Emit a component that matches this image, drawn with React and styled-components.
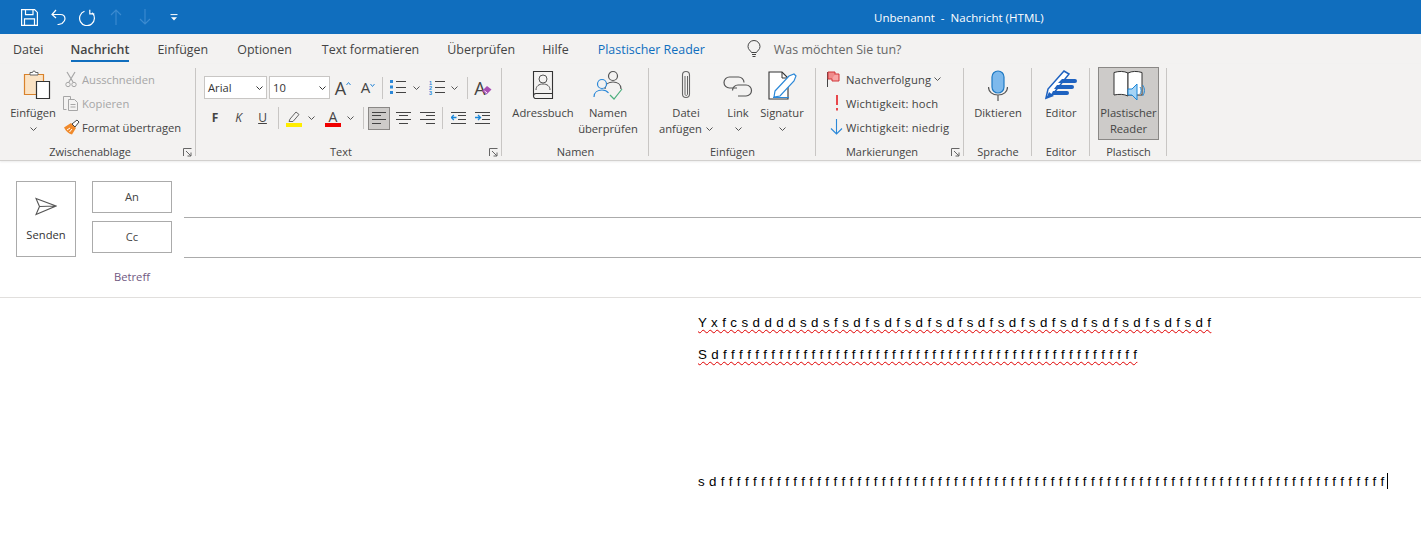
import React from "react";
import styled, { createGlobalStyle } from "styled-components";

const Global = createGlobalStyle`
  html, body { margin: 0; padding: 0; background: #fff; }
  body { font-family: "Open Sans", "Noto Sans", "Liberation Sans", sans-serif; width: 1421px; height: 559px; overflow: hidden; }
`;
const Page = styled.div`width:1421px;height:559px;display:flex;flex-direction:column;background:#fff;overflow:hidden;`;
const TitleBar = styled.header`height:34px;background:#106ebe;display:flex;align-items:center;flex:none;`;
const Qat = styled.div`display:flex;align-items:center;width:874px;padding-left:21px;box-sizing:border-box;`;
const QatBtn = styled.span`width:${p=>p.$w}px;display:flex;align-items:center;`;
const Title = styled.div`color:#fff;font-size:11.55px;white-space:pre;`;
const TabBar = styled.nav`height:30px;background:#f3f2f1;display:flex;align-items:center;padding-left:13px;flex:none;font-size:12.45px;color:#444;`;
const Tab = styled.span`
  margin-right:${p=>p.$gap}px;position:relative;height:30px;box-sizing:border-box;padding-top:1px;line-height:30px;white-space:nowrap;
  color:${p=>p.$blue?"#106ebe":"#444"};
  font-weight:${p=>p.$active?600:400};
  ${p=>p.$active?`&::after{content:"";position:absolute;left:0;right:0;bottom:2px;height:2px;background:#106ebe;}`:""}
`;
const Tell = styled.span`color:#666;margin-left:13px;`;
const Ribbon = styled.section`height:97px;box-sizing:border-box;padding:4px 0 0;background:#f3f2f1;display:flex;flex:none;border-bottom:1px solid #d2d0ce;box-shadow:0 1px 2px rgba(0,0,0,.08);font-size:11.2px;color:#444;`;
const Group = styled.div`
  width:${p=>p.$w}px;display:flex;flex-direction:column;position:relative;flex:none;
  &::after{content:"";position:absolute;top:0;right:0;bottom:4px;width:1px;background:#c8c6c4;}
`;
const GroupBody = styled.div`flex:1;display:flex;padding-left:${p=>p.$pl||0}px;min-height:0;`;
const GroupLabel = styled.div`height:16px;line-height:16px;text-align:center;font-size:11px;color:#444;white-space:nowrap;padding-right:${p=>p.$launcher?16:0}px;`;
const Launcher = styled.span`position:absolute;right:4px;bottom:3px;display:flex;`;
const BigBtn = styled.div`
  width:${p=>p.$w}px;box-sizing:border-box;display:flex;flex-direction:column;align-items:center;flex:none;
  text-align:center;line-height:16px;white-space:nowrap;
  padding-top:2px;height:${p=>p.$pressed?"73px":"auto"};
  ${p=>p.$pressed?"background:#cdcbc9;border:1px solid #8a8886;margin-top:-1px;":""}
`;
const BigIcon = styled.div`height:35px;display:flex;align-items:flex-start;justify-content:center;flex:none;padding-left:${p=>p.$pl||0}px;`;
const ChevLine = styled.span`height:16px;display:inline-flex;align-items:center;gap:4px;`;
const Smalls = styled.div`display:flex;flex-direction:column;margin-left:${p=>p.$ml||0}px;`;
const SmallRow = styled.div`height:24px;box-sizing:border-box;padding-bottom:2px;display:flex;align-items:center;white-space:nowrap;color:${p=>p.$off?"#a6a6a6":"#444"};letter-spacing:${p=>p.$wide?".2px":"0"};`;
const SmallIcon = styled.span`width:${p=>p.$w||20}px;display:flex;justify-content:${p=>p.$left?"flex-start":"center"};flex:none;`;
const Stack = styled.div`display:flex;flex-direction:column;padding-top:8px;`;
const ToolRow = styled.div`height:${p=>p.$h}px;display:flex;align-items:center;margin-top:${p=>p.$mt||0}px;`;
const Select = styled.div`width:${p=>p.$w}px;height:23px;box-sizing:border-box;border:1px solid #c8c6c4;background:#fff;display:flex;align-items:center;justify-content:space-between;padding:0 3px;margin-right:2px;font-size:11.2px;color:#333;flex:none;`;
const Tool = styled.span`position:relative;width:${p=>p.$w}px;height:${p=>p.$h||22}px;display:flex;align-items:center;justify-content:center;flex:none;box-sizing:border-box;${p=>p.$on?"background:#cdcbc9;border:1px solid #8a8886;":""}`;
const Glyph = styled.span`font-size:${p=>p.$s}px;line-height:${p=>p.$s}px;color:#444;font-weight:${p=>p.$b?700:400};font-style:${p=>p.$i?"italic":"normal"};text-decoration:${p=>p.$u?"underline":"none"};`;
const Overlap = styled.span`display:flex;margin-left:-4px;`;
const Sep = styled.span`width:1px;height:22px;background:#c8c6c4;flex:none;margin:0 ${p=>p.$r}px 0 ${p=>p.$l}px;`;
const ColorGlyph = styled.span`width:16px;height:17px;display:flex;flex-direction:column;align-items:center;`;
const ColorBar = styled.span`width:16px;height:4px;flex:none;background:${p=>p.$c};`;
const GlyphSlot = styled.span`height:13px;line-height:13px;font-size:14px;color:#444;flex:none;`;
const Compose = styled.section`height:137px;box-sizing:border-box;border-bottom:1px solid #e1dfdd;display:flex;padding:20px 0 0 16px;flex:none;`;
const Send = styled.div`width:60px;height:76px;box-sizing:border-box;border:1px solid #ababab;display:flex;flex-direction:column;align-items:center;padding-top:15px;font-size:11.2px;color:#333;flex:none;`;
const SendLabel = styled.span`margin-top:11px;`;
const Labels = styled.div`width:80px;margin-left:16px;display:flex;flex-direction:column;gap:8px;flex:none;`;
const AddrBtn = styled.div`height:32px;box-sizing:border-box;border:1px solid #ababab;padding-bottom:2px;display:flex;align-items:center;justify-content:center;font-size:11.2px;color:#444;`;
const Subject = styled.div`text-align:center;font-size:11.2px;color:#70587f;margin-top:8px;`;
const Fields = styled.div`flex:1;margin-left:12px;display:flex;flex-direction:column;`;
const Field = styled.div`height:36px;border-bottom:1px solid #ababab;margin-bottom:3px;`;
const Body = styled.main`padding:17px 0 0 698px;font-family:"Liberation Sans",Arial,sans-serif;font-size:13.33px;color:#000;`;
const Line = styled.p`margin:0 0 ${p=>p.$mb}px;height:16px;line-height:16px;white-space:pre;letter-spacing:.32px;word-spacing:${p=>p.$ws||0}px;`;
const Misspelt = styled.span`text-decoration:underline wavy #e00000 1px;text-underline-offset:2px;`;
const Caret = styled.span`display:inline-block;width:1px;height:16px;background:#000;vertical-align:-3px;margin-left:2px;`;

const S = ({w,h,children,vb})=>(<svg width={w} height={h} viewBox={vb||`0 0 ${w} ${h}`} fill="none" style={{display:"block",flex:"none"}}>{children}</svg>);
const Chev = ({c="#555"})=>(<S w={7} h={4}><path d="M.5.5 3.5 3.5 6.5.5" stroke={c} strokeWidth="1"/></S>);
const Launch = ()=>(<S w={9} h={9}><path d="M.5 8V.5H8.5M3 3l5 5M8 4.500V8H4.500" stroke="#666"/></S>);
const lines = (x,ys,w,c="#444")=>ys.map((y,i)=><path key={i} d={`M${Array.isArray(x)?x[i]:x} ${y}.5h${Array.isArray(w)?w[i]:w}`} stroke={c}/>);
const Num = ({y,n})=><text x="0" y={y} fontSize="5.500" fontWeight="700" fill="#2b88d8" fontFamily="Liberation Sans">{n}</text>;

export default function App(){
  return (<Page><Global/>
    <TitleBar>
      <Qat>
        <QatBtn $w={30}><S w={17} h={17}><path d="M.6.6h13l2.800 2.800v13H.6zM4.500.6v5h7.500v-5M3.500 16.400v-6.500h10v6.500" stroke="#fff" strokeWidth="1.200"/></S></QatBtn>
        <QatBtn $w={28}><S w={15} h={16}><path d="M1.500 5.500h8c3 0 4.500 2 4.500 4.500 0 2-1.500 3.200-3 4.500L6.500 15.800M5 1 1 5.500 5 9" stroke="#fff" strokeWidth="1.200"/></S></QatBtn>
        <QatBtn $w={31}><S w={17} h={17}><path d="M13 3.800A7.400 7.400 0 1 1 5.500 2.300M10.800.8v4h4.500" stroke="#fff" strokeWidth="1.200"/></S></QatBtn>
        <QatBtn $w={29}><S w={12} h={16}><path d="M6 16V1M1 6l5-5 5 5" stroke="#3c8bd0" strokeWidth="1.100"/></S></QatBtn>
        <QatBtn $w={31}><S w={12} h={16}><path d="M6 0v15M1 10l5 5 5-5" stroke="#3c8bd0" strokeWidth="1.100"/></S></QatBtn>
        <QatBtn $w={20}><S w={8} h={7}><path d="M.5.6h7" stroke="#fff"/><path d="M1 3.200h6L4 6.500z" fill="#fff"/></S></QatBtn>
      </Qat>
      <Title>Unbenannt  -  Nachricht (HTML)</Title>
    </TitleBar>
    <TabBar>
      <Tab $gap={27}>Datei</Tab>
      <Tab $gap={28} $active>Nachricht</Tab>
      <Tab $gap={29}>Einfügen</Tab>
      <Tab $gap={30}>Optionen</Tab>
      <Tab $gap={28}>Text formatieren</Tab>
      <Tab $gap={27}>Überprüfen</Tab>
      <Tab $gap={29}>Hilfe</Tab>
      <Tab $gap={42} $blue>Plastischer Reader</Tab>
      <S w={14} h={18}><path d="M4.500 12.500C3.500 10.500 1 9.500 1 6.500a6 6 0 0 1 12 0c0 3-2.500 4-3.500 6zM5 14.500h4M5.500 16.500h3" stroke="#444"/></S>
      <Tell>Was möchten Sie tun?</Tell>
    </TabBar>
    <Ribbon>
      <Group $w={196}>
        <GroupBody $pl={9}>
          <BigBtn $w={48}>
            <BigIcon $pl={7}><S w={28} h={30}><path d="M1.500 4.500h19v20h-19z" fill="#fbe3c4" stroke="#d9822b" strokeWidth="1.200"/><path d="M7 5V2.500h2.500a1.500 1.500 0 0 1 3 0H15V5z" fill="#fff" stroke="#666"/><path d="M13.500 11.500h13v17h-13z" fill="#fff" stroke="#333" strokeWidth="1.200"/></S></BigIcon>
            <span>Einfügen</span>
            <ChevLine><Chev/></ChevLine>
          </BigBtn>
          <Smalls $ml={3}>
            <SmallRow $off><SmallIcon $w={22}><S w={12} h={17}><path d="M2 1l6 10M10 1 4 11" stroke="#a6a6a6" strokeWidth="1.200"/><circle cx="3" cy="13.500" r="2.200" stroke="#a6a6a6"/><circle cx="9" cy="13.500" r="2.200" stroke="#a6a6a6"/></S></SmallIcon>Ausschneiden</SmallRow>
            <SmallRow $off><SmallIcon $w={22}><S w={16} h={16}><path d="M3.500 14.500H.5V1.500h7v3M5.500 4.500h6l3 3v8h-9z" stroke="#a6a6a6"/><path d="M7.500 9.500h5M7.500 12h5" stroke="#a6a6a6"/></S></SmallIcon>Kopieren</SmallRow>
            <SmallRow><SmallIcon $w={22}><S w={17} h={16}><path d="M1 8.500 8 4l5 5-4 6.500c-3-.5-6-3-8-7z" fill="#f08a2c"/><path d="M4 11l3-2M6.500 13 9 10" stroke="#fff"/><path d="M9 5l5-4 2 2-4 5z" fill="#fff" stroke="#444"/></S></SmallIcon>Format übertragen</SmallRow>
          </Smalls>
        </GroupBody>
        <GroupLabel $launcher>Zwischenablage</GroupLabel>
        <Launcher><Launch/></Launcher>
      </Group>

      <Group $w={306}>
        <GroupBody $pl={8}>
          <Stack>
            <ToolRow $h={23}>
              <Select $w={63}>Arial<Chev c="#333"/></Select>
              <Select $w={61}>10<Chev c="#333"/></Select>
              <Tool $w={22}><Glyph $s={18}>A</Glyph><S w={5} h={14}><path d="M.5 4 2.500 1.500 4.500 4" stroke="#2b88d8"/></S></Tool>
              <Tool $w={28}><Glyph $s={15}>A</Glyph><S w={5} h={12}><path d="M.5 2 2.500 4.500 4.500 2" stroke="#2b88d8"/></S></Tool>
              <Sep $l={0} $r={6}/>
              <Tool $w={18}><S w={16} h={15}>{[0,5.500,11].map(y=><rect key={y} y={y} width="3" height="3" fill="#2b88d8"/>)}{lines(6,[1,7,12],10)}</S></Tool>
              <Tool $w={18}><Chev/></Tool>
              <Tool $w={23}><S w={16} h={15}><Num y={5} n="1"/><Num y={10} n="2"/><Num y={15} n="3"/>{lines(6,[1,7,12],10)}</S></Tool>
              <Tool $w={12}><Chev/></Tool>
              <Sep $l={7} $r={6}/>
              <Tool $w={18}><Glyph $s={18}>A</Glyph><Overlap><S w={10} h={16}><path d="M0 11l5-5 4.500 3.500-5 5z" fill="#a84fb4"/><path d="M2.500 11l2.500 2" stroke="#fff"/></S></Overlap></Tool>
            </ToolRow>
            <ToolRow $h={24} $mt={7}>
              <Tool $w={22}><Glyph $s={12} $b>F</Glyph></Tool>
              <Tool $w={25}><Glyph $s={12} $i>K</Glyph></Tool>
              <Tool $w={23}><Glyph $s={12} $u>U</Glyph></Tool>
              <Sep $l={4} $r={7}/>
              <Tool $w={16}><S w={16} h={17}><path d="M4 9l6-7 3 2.500-6 7H3z" stroke="#666"/><rect y="13" width="16" height="4" fill="#ffed00"/></S></Tool>
              <Tool $w={18}><Chev/></Tool>
              <Tool $w={26}><ColorGlyph><GlyphSlot>A</GlyphSlot><ColorBar $c="#f00000"/></ColorGlyph></Tool>
              <Tool $w={8}><Chev/></Tool>
              <Sep $l={9} $r={4}/>
              <Tool $w={22} $h={23} $on><S w={15} h={12}>{lines([0,0,0,0],[0,3,7,11],[14,9,14,9])}</S></Tool>
              <Tool $w={26}><S w={15} h={12}>{lines([0,3,0,3],[0,3,7,11],[15,9,15,9])}</S></Tool>
              <Tool $w={22}><S w={15} h={12}>{lines([0,6,0,6],[0,3,7,11],[15,9,15,9])}</S></Tool>
              <Sep $l={4} $r={6}/>
              <Tool $w={18}><S w={15} h={12}>{lines([0,7,7,0],[0,3,7,11],[15,8,8,15])}<path d="M0 5.500h5.500M2.800 3 .3 5.500 2.800 8" stroke="#1a86d8" strokeWidth="1.300"/></S></Tool>
              <Tool $w={30}><S w={15} h={12}>{lines([0,7,7,0],[0,3,7,11],[15,8,8,15])}<path d="M0 5.500h5.500M3 3 5.500 5.500 3 8" stroke="#1a86d8" strokeWidth="1.300"/></S></Tool>
            </ToolRow>
          </Stack>
        </GroupBody>
        <GroupLabel $launcher>Text</GroupLabel>
        <Launcher><Launch/></Launcher>
      </Group>

      <Group $w={147}>
        <GroupBody $pl={6}>
          <BigBtn $w={70}>
            <BigIcon><S w={22} h={30}><path d="M1.500 26V1.500h19v27H4a2.500 2.500 0 0 1 0-5h16.500" stroke="#333" strokeWidth="1.100"/><circle cx="11" cy="9" r="4" stroke="#555"/><path d="M4 20c0-4 3-6 7-6s7 2 7 6" stroke="#555"/></S></BigIcon>
            <span>Adressbuch</span>
          </BigBtn>
          <BigBtn $w={60}>
            <BigIcon><S w={30} h={30}><circle cx="20" cy="6" r="4.500" stroke="#555" strokeWidth="1.200"/><path d="M12 19c0-5 4-7 8-7s8 2 8 7" stroke="#555" strokeWidth="1.200"/><circle cx="9" cy="14" r="4.500" fill="#f3f2f1" stroke="#2b88d8" strokeWidth="1.200"/><path d="M1 27c0-5 4-7 8-7 3 0 5 1 6.500 3" stroke="#2b88d8" strokeWidth="1.200"/><path d="M17 25l4 4 8-10" stroke="#4caf7d" strokeWidth="1.200"/></S></BigIcon>
            <span>Namen<br/>überprüfen</span>
          </BigBtn>
        </GroupBody>
        <GroupLabel>Namen</GroupLabel>
      </Group>

      <Group $w={167}>
        <GroupBody $pl={7}>
          <BigBtn $w={60}>
            <BigIcon><S w={12} h={30}><path d="M9.500 9v15a3.500 3.500 0 0 1-7 0V5a3.500 3.500 0 0 1 7 0v19" stroke="#666" strokeWidth="1.100"/><path d="M5 6v18c0 2 2.500 2 2.500 0V6" stroke="#666"/></S></BigIcon>
            <span>Datei</span>
            <ChevLine>anfügen<Chev/></ChevLine>
          </BigBtn>
          <BigBtn $w={44}>
            <BigIcon><S w={30} h={28}><path d="M14 18H6.500a5.500 5.500 0 0 1 0-11h9a5.500 5.500 0 0 1 5.500 5.500" stroke="#555" strokeWidth="1.200"/><path d="M9.500 20.500a5.500 5.500 0 0 1 5.500-5.500h8a5.500 5.500 0 0 1 0 11h-8" stroke="#555" strokeWidth="1.200"/></S></BigIcon>
            <span>Link</span>
            <ChevLine><Chev/></ChevLine>
          </BigBtn>
          <BigBtn $w={44}>
            <BigIcon><S w={29} h={30}><path d="M1 2h13l6 6v21H1z" fill="#fff" stroke="#333" strokeWidth="1.100"/><path d="M14 2v6h6" stroke="#333"/><path d="M7 21 21 6l5-2 2 2-2 5-14 15-6 1z" fill="#fff" stroke="#2b88d8" strokeWidth="1.200"/><path d="M5 27.500h16" stroke="#2b88d8"/></S></BigIcon>
            <span>Signatur</span>
            <ChevLine><Chev/></ChevLine>
          </BigBtn>
        </GroupBody>
        <GroupLabel>Einfügen</GroupLabel>
      </Group>

      <Group $w={148}>
        <GroupBody $pl={11}>
          <Smalls>
            <SmallRow $wide><SmallIcon $w={19} $left><S w={13} h={16}><path d="M.5 1v15" stroke="#444"/><path d="M1 1h7v7H1z" fill="#ef8b8b" stroke="#d13438"/><path d="M8 3h4v7H5V8" fill="#f8a5a5" stroke="#d13438"/></S></SmallIcon>Nachverfolgung&nbsp;<Chev/></SmallRow>
            <SmallRow $wide><SmallIcon $w={19}><S w={4} h={16}><path d="M2 0v10" stroke="#e8474b" strokeWidth="2"/><rect x="1" y="13" width="2" height="2.500" fill="#e8474b"/></S></SmallIcon>Wichtigkeit: hoch</SmallRow>
            <SmallRow $wide><SmallIcon $w={19}><S w={13} h={16}><path d="M6.500 0v15M1 9.500l5.500 5.500L12 9.500" stroke="#2b88d8" strokeWidth="1.100"/></S></SmallIcon>Wichtigkeit: niedrig</SmallRow>
          </Smalls>
        </GroupBody>
        <GroupLabel $launcher>Markierungen</GroupLabel>
        <Launcher><Launch/></Launcher>
      </Group>

      <Group $w={68}>
        <GroupBody $pl={4}>
          <BigBtn $w={60}>
            <BigIcon><S w={20} h={31}><rect x="4" y="1" width="12" height="22" rx="6" fill="#7db9ec" stroke="#1f7ac4" strokeWidth="1.200"/><path d="M.5 17c0 5 4 8 9.500 8s9.500-3 9.500-8M10 25v6" stroke="#555" strokeWidth="1.200"/></S></BigIcon>
            <span>Diktieren</span>
          </BigBtn>
        </GroupBody>
        <GroupLabel>Sprache</GroupLabel>
      </Group>

      <Group $w={58}>
        <GroupBody $pl={4}>
          <BigBtn $w={50}>
            <BigIcon><S w={32} h={30}><path d="M1 28 3 19 19 1l5 3L8 24z" fill="#fff" stroke="#1e62c0" strokeWidth="1.500"/><path d="M1 29l8-3-5-4z" fill="#1e62c0"/><path d="M17 9h13a2 2 0 0 1 0 4H13zM12 15h15a2 2 0 0 1 0 4H9zM8 21h14a2 2 0 0 1 0 4H6z" fill="#1e62c0"/></S></BigIcon>
            <span>Editor</span>
          </BigBtn>
        </GroupBody>
        <GroupLabel>Editor</GroupLabel>
      </Group>

      <Group $w={77}>
        <GroupBody $pl={8}>
          <BigBtn $w={61} $pressed>
            <BigIcon><S w={32} h={31}><path d="M1 2.500C6 1 11 1 15 3v23c-4-2-9-2-14-1z" fill="#fff" stroke="#333"/><path d="M15 3c4-2 9-2 14-.5V25H15z" fill="#fff" stroke="#333"/><path d="M15 19h4l5-5v16l-5-5h-4z" fill="#a6d4f5" stroke="#1a86d8"/><path d="M27 17c1.500 2 1.500 5 0 7M29.500 15c2.500 3 2.500 8 0 11" stroke="#1a86d8"/></S></BigIcon>
            <span>Plastischer<br/>Reader</span>
          </BigBtn>
        </GroupBody>
        <GroupLabel>Plastisch</GroupLabel>
      </Group>
    </Ribbon>
    <Compose>
      <Send>
        <S w={22} h={19}><path d="M1 1.500 21 9 1 17.500 4.500 9.500zM4.500 9.500 21 9" stroke="#555" strokeWidth="1.100"/></S>
        <SendLabel>Senden</SendLabel>
      </Send>
      <Labels>
        <AddrBtn>An</AddrBtn>
        <AddrBtn>Cc</AddrBtn>
        <Subject>Betreff</Subject>
      </Labels>
      <Fields>
        <Field/>
        <Field/>
      </Fields>
    </Compose>
    <Body>
      <Line $mb={16} $ws={0.1}><Misspelt>Y x f c s d d d d s d s f s d f s d f s d f s d f s d f s d f s d f s d f s d f s d f s d f s d f</Misspelt></Line>
      <Line $mb={110}><Misspelt>{"S d "+Array(52).fill("f").join(" ")}</Misspelt></Line>
      <Line $mb={0}>{"s d "+Array(83).fill("f").join(" ")}<Caret/></Line>
    </Body>
  </Page>);
}
